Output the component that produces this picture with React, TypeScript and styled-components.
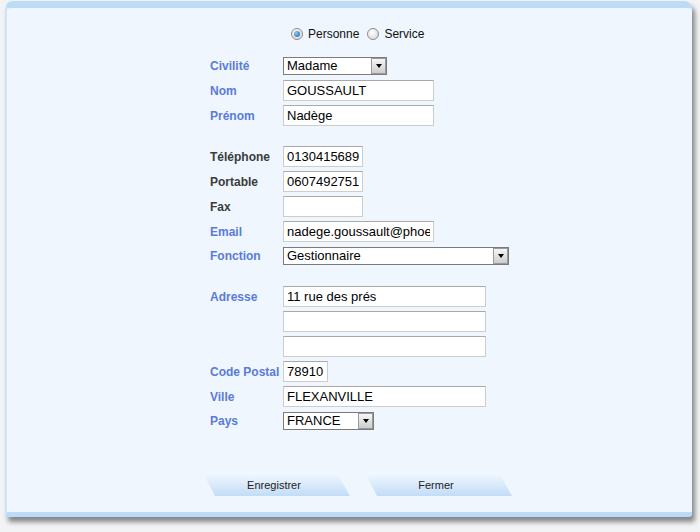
import React from 'react'
import styled, { createGlobalStyle, css } from 'styled-components'

const GlobalStyle = createGlobalStyle`
  html, body {
    margin: 0;
    padding: 0;
  }
  body {
    width: 700px;
    height: 532px;
    overflow: hidden;
    background: #f1f3f5;
    font-family: Arial, "Liberation Sans", sans-serif;
  }
`

const Page = styled.div`
  width: 700px;
  height: 532px;
  box-sizing: border-box;
  padding: 1px 8px 0 5px;
`

const Panel = styled.div`
  width: 687px;
  height: 516px;
  box-sizing: border-box;
  background: #eff6fd;
  border-top: 7px solid #bcdbf7;
  border-left: 2px solid #cde3f8;
  border-bottom: 5px solid #bcdbf7;
  border-radius: 8px 8px 3px 3px;
  box-shadow: 3px 5px 5px rgba(0, 0, 0, 0.45);
  padding-top: 16px;
`

const RadioRow = styled.div`
  display: flex;
  align-items: center;
  height: 20px;
  padding-left: 284px;
  font-size: 12px;
  color: #111;
`

const RadioLabel = styled.label`
  display: flex;
  align-items: center;
  margin-right: 8px;
`

const RadioDot = styled.span<{ $on?: boolean }>`
  position: relative;
  width: 12px;
  height: 12px;
  margin-right: 5px;
  box-sizing: border-box;
  border-radius: 50%;
  border: 1px solid #8c8c8c;
  background: radial-gradient(circle at 40% 35%, #ffffff, #d2d2d2);
  ${p =>
    p.$on &&
    css`
      &::after {
        content: '';
        position: absolute;
        left: 2px;
        top: 2px;
        width: 6px;
        height: 6px;
        border-radius: 50%;
        background: radial-gradient(circle at 35% 35%, #8ccdf4, #1a5c9c);
      }
    `}
`

const Form = styled.div`
  margin-top: 10px;
  padding-left: 203px;
  display: flex;
  flex-direction: column;
`

const Row = styled.div<{ $h?: number }>`
  display: flex;
  align-items: center;
  height: ${p => p.$h ?? 25}px;
`

const Spacer = styled.div`
  height: 16px;
`

const Label = styled.span<{ $dark?: boolean }>`
  width: 73px;
  flex: none;
  font-size: 12px;
  font-weight: bold;
  color: ${p => (p.$dark ? '#3c3c3c' : '#5a7bd9')};
  white-space: nowrap;
`

const TextField = styled.input<{ $w: number }>`
  width: ${p => p.$w}px;
  height: 21px;
  box-sizing: border-box;
  margin: 0;
  padding: 0 3px;
  border: 1px solid #cdcdcd;
  border-top-color: #a9a9a9;
  background: #ffffff;
  font-family: Arial, "Liberation Sans", sans-serif;
  font-size: 13px;
  color: #000;
  outline: none;
`

const SelectBox = styled.div<{ $w: number }>`
  position: relative;
  width: ${p => p.$w}px;
  height: 18px;
  box-sizing: border-box;
  border: 1px solid #7b7b7b;
  background: #ffffff;
  padding-left: 3px;
  font-size: 13px;
  line-height: 16px;
  color: #000;
`

const SelectArrow = styled.span`
  position: absolute;
  top: 0;
  right: 0;
  width: 15px;
  height: 16px;
  box-sizing: border-box;
  border: 1px solid #9a9a9a;
  background: linear-gradient(#f6f6f6, #cdcdcd);
  display: flex;
  align-items: center;
  justify-content: center;
  &::after {
    content: '';
    border-left: 3.5px solid transparent;
    border-right: 3.5px solid transparent;
    border-top: 4px solid #000;
  }
`

const ButtonRow = styled.div`
  display: flex;
  gap: 15px;
  margin-top: 40px;
  padding-left: 196px;
`

const SlantButton = styled.button`
  width: 147px;
  height: 23px;
  border: 0;
  margin: 0;
  padding: 0 5px 0 0;
  clip-path: polygon(0 0, 134px 0, 100% 100%, 12px 100%);
  background: linear-gradient(#f2f8fe, #c2dcf7);
  font-family: Arial, "Liberation Sans", sans-serif;
  font-size: 11px;
  color: #222;
  cursor: pointer;
`

const Select = ({ w, value }: { w: number; value: string }) => (
  <SelectBox $w={w}>
    {value}
    <SelectArrow />
  </SelectBox>
)

export default function App() {
  return (
    <>
      <GlobalStyle />
      <Page>
        <Panel>
          <RadioRow>
            <RadioLabel>
              <RadioDot $on />
              Personne
            </RadioLabel>
            <RadioLabel>
              <RadioDot />
              Service
            </RadioLabel>
          </RadioRow>

          <Form>
            <Row $h={24}>
              <Label>Civilité</Label>
              <Select w={104} value="Madame" />
            </Row>
            <Row>
              <Label>Nom</Label>
              <TextField $w={151} defaultValue="GOUSSAULT" />
            </Row>
            <Row>
              <Label>Prénom</Label>
              <TextField $w={151} defaultValue="Nadège" />
            </Row>

            <Spacer />

            <Row>
              <Label $dark>Téléphone</Label>
              <TextField $w={80} defaultValue="0130415689" />
            </Row>
            <Row>
              <Label $dark>Portable</Label>
              <TextField $w={80} defaultValue="0607492751" />
            </Row>
            <Row>
              <Label $dark>Fax</Label>
              <TextField $w={80} defaultValue="" />
            </Row>
            <Row>
              <Label>Email</Label>
              <TextField $w={151} defaultValue="nadege.goussault@phoenix.fr" />
            </Row>
            <Row $h={24}>
              <Label>Fonction</Label>
              <Select w={226} value="Gestionnaire" />
            </Row>

            <Spacer />

            <Row>
              <Label>Adresse</Label>
              <TextField $w={203} defaultValue="11 rue des prés" />
            </Row>
            <Row>
              <Label />
              <TextField $w={203} defaultValue="" />
            </Row>
            <Row>
              <Label />
              <TextField $w={203} defaultValue="" />
            </Row>
            <Row>
              <Label>Code Postal</Label>
              <TextField $w={45} defaultValue="78910" />
            </Row>
            <Row>
              <Label>Ville</Label>
              <TextField $w={203} defaultValue="FLEXANVILLE" />
            </Row>
            <Row $h={24}>
              <Label>Pays</Label>
              <Select w={91} value="FRANCE" />
            </Row>
          </Form>

          <ButtonRow>
            <SlantButton type="button">Enregistrer</SlantButton>
            <SlantButton type="button">Fermer</SlantButton>
          </ButtonRow>
        </Panel>
      </Page>
    </>
  )
}
